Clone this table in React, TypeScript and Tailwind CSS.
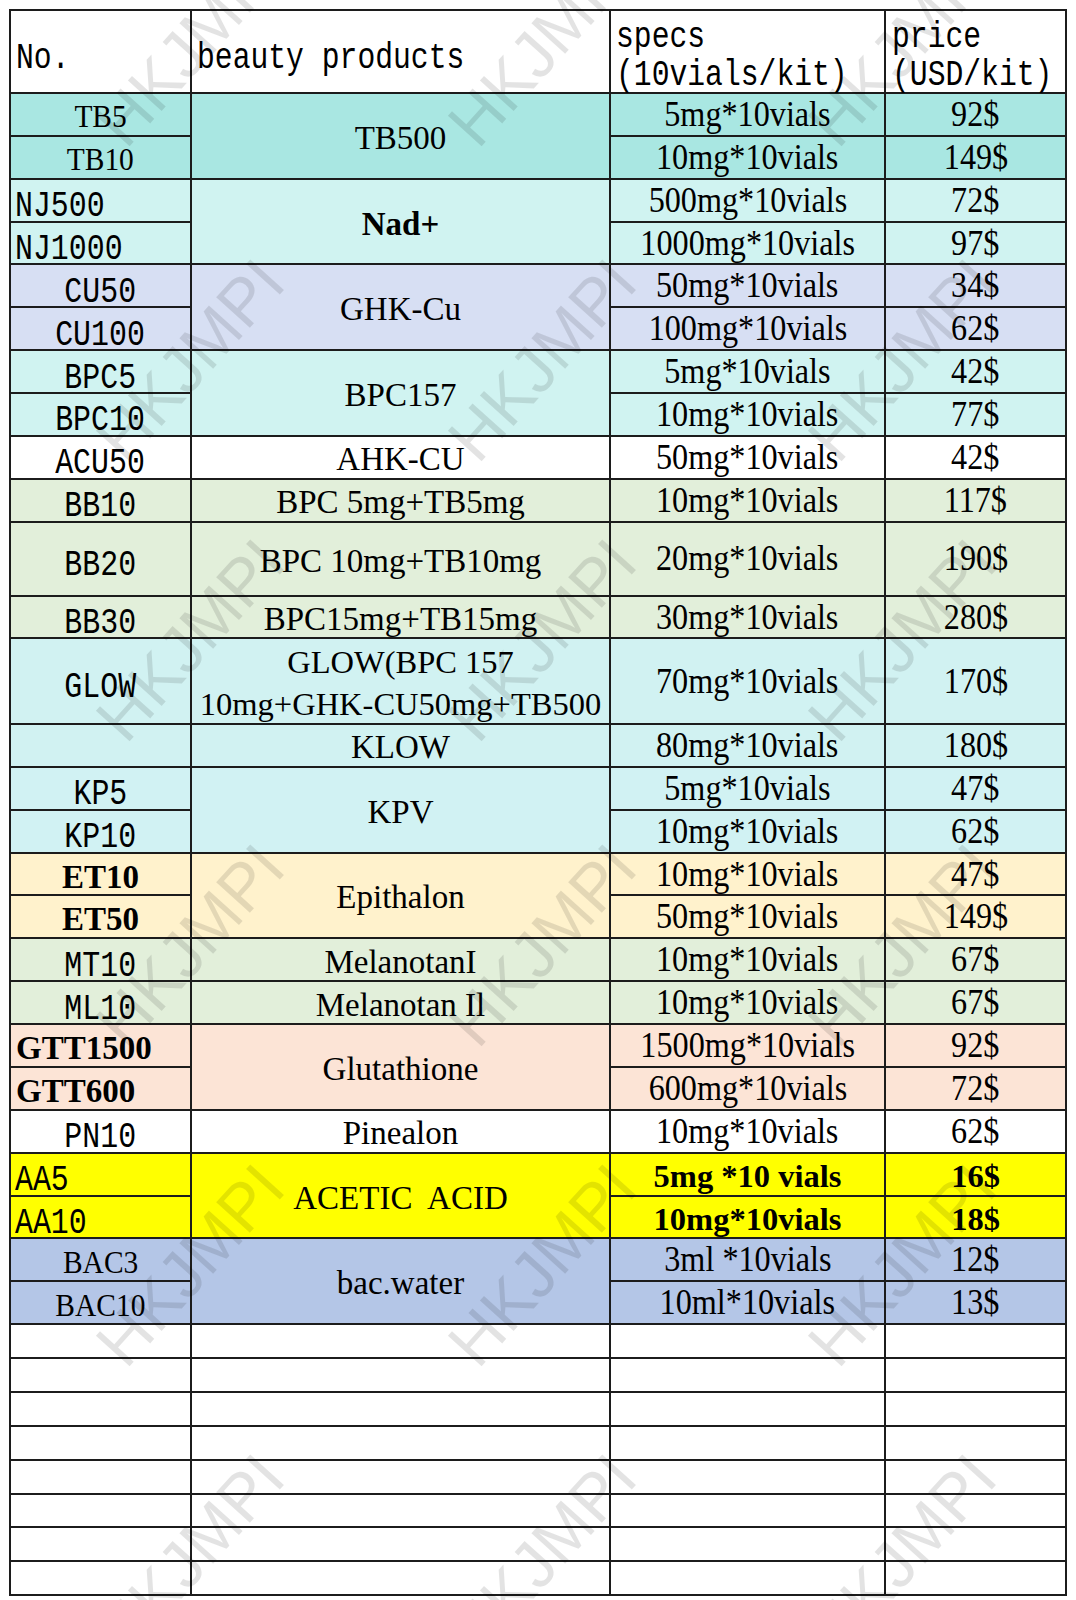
import React from "react";
import clsx from "clsx";

const serif = "font-['Liberation_Serif','Times_New_Roman',serif]";
const mono = "font-['Liberation_Mono','Courier_New',monospace]";

type CodeKind = "mono" | "monoLeft" | "serif" | "bold" | "boldLeft";

type Item = {
  code?: string;
  kind?: CodeKind;
  spec: string;
  price: string;
  strong?: boolean;
};

type Group = {
  bg: string;
  product: React.ReactNode;
  productCell?: string;
  items: Item[];
};

const codeCell: Record<CodeKind, string> = {
  mono: "items-center justify-center pt-[14px]",
  monoLeft: "items-center justify-start pl-[4px] pt-[14px]",
  serif: "items-center justify-center pt-[5px]",
  bold: "items-center justify-center pt-[6px]",
  boldLeft: "items-center justify-start pl-[5px] pt-[6px]",
};

const codeText: Record<CodeKind, string> = {
  mono: `${mono} text-[36px] leading-none scale-x-[0.83]`,
  monoLeft: `${mono} text-[36px] leading-none scale-x-[0.83] origin-left`,
  serif: `${serif} text-[31px] leading-none scale-x-[0.95]`,
  bold: `${serif} text-[33px] leading-none font-bold`,
  boldLeft: `${serif} text-[33px] leading-none font-bold`,
};

const green = "bg-[#e2efda]";
const cyan = "bg-[#d0f3f1]";

const groups: Group[] = [
  {
    bg: "bg-[#a9e7e2]",
    product: "TB500",
    items: [
      { code: "TB5", kind: "serif", spec: "5mg*10vials", price: "92$" },
      { code: "TB10", kind: "serif", spec: "10mg*10vials", price: "149$" },
    ],
  },
  {
    bg: cyan,
    product: <span className="font-bold">Nad+</span>,
    items: [
      { code: "NJ500", kind: "monoLeft", spec: "500mg*10vials", price: "72$" },
      { code: "NJ1000", kind: "monoLeft", spec: "1000mg*10vials", price: "97$" },
    ],
  },
  {
    bg: "bg-[#d7dff3]",
    product: "GHK-Cu",
    items: [
      { code: "CU50", kind: "mono", spec: "50mg*10vials", price: "34$" },
      { code: "CU100", kind: "mono", spec: "100mg*10vials", price: "62$" },
    ],
  },
  {
    bg: cyan,
    product: "BPC157",
    items: [
      { code: "BPC5", kind: "mono", spec: "5mg*10vials", price: "42$" },
      { code: "BPC10", kind: "mono", spec: "10mg*10vials", price: "77$" },
    ],
  },
  {
    bg: "bg-white",
    product: "AHK-CU",
    items: [{ code: "ACU50", kind: "mono", spec: "50mg*10vials", price: "42$" }],
  },
  {
    bg: green,
    product: "BPC 5mg+TB5mg",
    items: [{ code: "BB10", kind: "mono", spec: "10mg*10vials", price: "117$" }],
  },
  {
    bg: green,
    product: "BPC 10mg+TB10mg",
    items: [{ code: "BB20", kind: "mono", spec: "20mg*10vials", price: "190$" }],
  },
  {
    bg: green,
    product: "BPC15mg+TB15mg",
    items: [{ code: "BB30", kind: "mono", spec: "30mg*10vials", price: "280$" }],
  },
  {
    bg: "bg-[#d1f2f2]",
    product: (
      <span className="text-[32.5px] leading-[42px]">{"GLOW(BPC 157\n10mg+GHK-CU50mg+TB500"}</span>
    ),
    productCell: "pt-[4px]",
    items: [{ code: "GLOW", kind: "mono", spec: "70mg*10vials", price: "170$" }],
  },
  {
    bg: "bg-[#d1f2f2]",
    product: "KLOW",
    items: [{ spec: "80mg*10vials", price: "180$" }],
  },
  {
    bg: "bg-[#d1f2f3]",
    product: "KPV",
    items: [
      { code: "KP5", kind: "mono", spec: "5mg*10vials", price: "47$" },
      { code: "KP10", kind: "mono", spec: "10mg*10vials", price: "62$" },
    ],
  },
  {
    bg: "bg-[#fff2cc]",
    product: "Epithalon",
    items: [
      { code: "ET10", kind: "bold", spec: "10mg*10vials", price: "47$" },
      { code: "ET50", kind: "bold", spec: "50mg*10vials", price: "149$" },
    ],
  },
  {
    bg: green,
    product: "MelanotanI",
    items: [{ code: "MT10", kind: "mono", spec: "10mg*10vials", price: "67$" }],
  },
  {
    bg: green,
    product: "Melanotan Il",
    items: [{ code: "ML10", kind: "mono", spec: "10mg*10vials", price: "67$" }],
  },
  {
    bg: "bg-[#fce4d6]",
    product: "Glutathione",
    items: [
      { code: "GTT1500", kind: "boldLeft", spec: "1500mg*10vials", price: "92$" },
      { code: "GTT600", kind: "boldLeft", spec: "600mg*10vials", price: "72$" },
    ],
  },
  {
    bg: "bg-white",
    product: "Pinealon",
    items: [{ code: "PN10", kind: "mono", spec: "10mg*10vials", price: "62$" }],
  },
  {
    bg: "bg-[#ffff00]",
    product: "ACETIC  ACID",
    items: [
      { code: "AA5", kind: "monoLeft", spec: "5mg *10 vials", price: "16$", strong: true },
      { code: "AA10", kind: "monoLeft", spec: "10mg*10vials", price: "18$", strong: true },
    ],
  },
  {
    bg: "bg-[#b4c6e7]",
    product: "bac.water",
    items: [
      { code: "BAC3", kind: "serif", spec: "3ml *10vials", price: "12$" },
      { code: "BAC10", kind: "serif", spec: "10ml*10vials", price: "13$" },
    ],
  },
];

const Cell = ({
  className,
  children,
}: {
  className?: string;
  children?: React.ReactNode;
}) => (
  <div className={clsx("flex min-w-0 border-r-2 border-b-2 border-[#1c1c1c]", className)}>
    {children}
  </div>
);

const Txt = ({ className, children }: { className: string; children: React.ReactNode }) => (
  <span className={clsx("inline-block whitespace-pre", className)}>{children}</span>
);

const valueText = `${serif} text-[35px] leading-none scale-x-[0.92]`;
const strongText = `${serif} text-[32.5px] leading-none font-bold`;
const headText = `${mono} text-[36px] scale-x-[0.825] origin-left`;

// watermark grid, positions read off the picture
const wmRows = ["top-[45px]", "top-[360px]", "top-[640px]", "top-[945px]", "top-[1265px]", "top-[1555px]"];
const wmCols = ["left-[190px]", "left-[542px]", "left-[902px]"];

const App = () => {
  return (
    <div className="relative h-[1600px] w-[1076px] overflow-hidden bg-white pl-[9px] pt-[9px] text-black">
      <div className="grid w-max grid-cols-[181px_419px_275px_181px] grid-rows-[83px_repeat(10,42.86px)_74px_42.86px_85.6px_repeat(14,42.86px)_repeat(8,33.9px)] border-l-2 border-t-2 border-[#1c1c1c]">
        {/* header */}
        <Cell className="items-start bg-white pl-[5px] pt-[30px]">
          <Txt className={`${headText} leading-none`}>No.</Txt>
        </Cell>
        <Cell className="items-start bg-white pl-[5px] pt-[30px]">
          <Txt className={`${headText} leading-none`}>beauty products</Txt>
        </Cell>
        <Cell className="items-start bg-white pl-[5px] pt-[8px]">
          <Txt className={`${headText} leading-[38px]`}>{"specs\n(10vials/kit)"}</Txt>
        </Cell>
        <Cell className="items-start bg-white pl-[6px] pt-[8px]">
          <Txt className={`${headText} leading-[38px]`}>{"price\n(USD/kit)"}</Txt>
        </Cell>

        {/* products */}
        {groups.map((g, gi) =>
          g.items.map((it, i) => (
            <React.Fragment key={`${gi}-${i}`}>
              <Cell className={clsx(g.bg, it.kind ? codeCell[it.kind] : "")}>
                {it.code && it.kind && <Txt className={codeText[it.kind]}>{it.code}</Txt>}
              </Cell>
              {i === 0 && (
                <Cell
                  className={clsx(
                    g.bg,
                    "items-center justify-center text-center",
                    g.items.length > 1 && "row-span-2",
                    g.productCell ?? "pt-[5px]"
                  )}
                >
                  <Txt className={`${serif} text-[33px] leading-none`}>{g.product}</Txt>
                </Cell>
              )}
              <Cell className={clsx(g.bg, "items-center justify-center", it.strong && "pt-[4px]")}>
                <Txt className={it.strong ? strongText : valueText}>{it.spec}</Txt>
              </Cell>
              <Cell className={clsx(g.bg, "items-center justify-center", it.strong && "pt-[4px]")}>
                <Txt className={it.strong ? strongText : valueText}>{it.price}</Txt>
              </Cell>
            </React.Fragment>
          ))
        )}

        {/* blank rows */}
        {Array.from({ length: 32 }).map((_, i) => (
          <Cell key={i} className="bg-white" />
        ))}
      </div>

      {/* watermark */}
      <div className="pointer-events-none absolute inset-0">
        {wmRows.map((r) =>
          wmCols.map((c) => (
            <span
              key={r + c}
              className={clsx(
                "absolute -translate-x-1/2 -translate-y-1/2 -rotate-[48deg] whitespace-nowrap font-['Liberation_Sans',Arial,sans-serif] text-[66px] leading-none text-black/[0.11]",
                r,
                c
              )}
            >
              HKJMPI
            </span>
          ))
        )}
      </div>
    </div>
  );
};

export default App;
